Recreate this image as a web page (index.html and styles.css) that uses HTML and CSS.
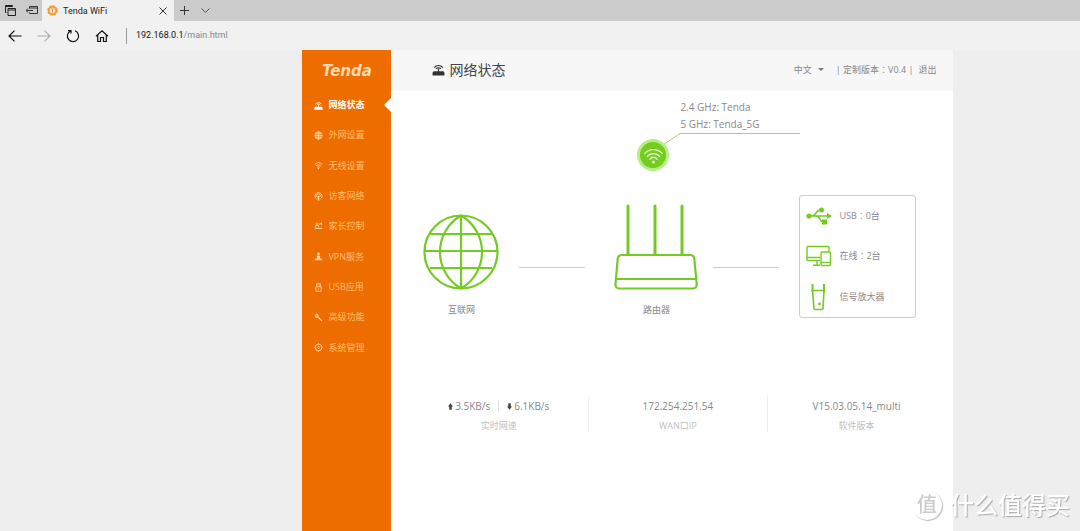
FILE: index.html
```html
<!DOCTYPE html>
<html lang="zh-CN">
<head>
<meta charset="utf-8">
<title>Tenda WiFi</title>
<link rel="stylesheet" href="styles.css">
</head>
<body>
<svg class="defs" aria-hidden="true">
  <symbol id="router" viewBox="0 0 12 12"><path d="M1.500 7.500h9l1 1.500v2.500H.5V9z" fill="currentColor"/><path d="M6 8V5M2 4.300a5 5 0 0 1 8 0M3.700 5.500a2.900 2.900 0 0 1 4.600 0" fill="none" stroke="currentColor" stroke-width="1.100"/></symbol>
  <symbol id="wifi" viewBox="0 0 12 12"><path d="M1 4.500a7.500 7.500 0 0 1 10 0M2.700 6.500a5 5 0 0 1 6.600 0M4.300 8.400a2.700 2.700 0 0 1 3.400 0" fill="none" stroke="currentColor" stroke-width="1.200"/><circle cx="6" cy="10" r="1" fill="currentColor"/></symbol>
</svg>

<header class="browser">
  <div class="tabs">
    <div class="tab-tools">
      <button class="icon-btn" aria-label="标签页"><svg width="11" height="11" viewBox="0 0 11 11" fill="none" stroke="#222"><path d="M1.500 7.500H.5v-7h7v1M.5 1.500h7M3 3.500h7.500v7H3zM3 5h7.500" /></svg></button>
      <button class="icon-btn" aria-label="搁置标签页"><svg width="12" height="9" viewBox="0 0 12 9" fill="none" stroke="#333"><path d="M3.500 2.500v-2h8v7h-8v-1M3.500 2h8M0 4.500h7M2 2.500l-2 2 2 2"/></svg></button>
    </div>
    <div class="tab">
      <svg width="11" height="11" viewBox="0 0 11 11"><circle cx="5.500" cy="5.500" r="3.800" fill="none" stroke="#f79a2c" stroke-width="2"/><circle cx="5.500" cy="5.500" r="4.900" fill="none" stroke="#f79a2c" stroke-dasharray="2 1.850"/><path d="M4 4h3M5.500 4v3.500" stroke="#f79a2c"/></svg>
      <span class="tab-title">Tenda WiFi</span>
      <button class="icon-btn" aria-label="关闭"><svg width="8" height="8" viewBox="0 0 8 8" stroke="#333"><path d="M.5.5l7 7M7.500.5l-7 7"/></svg></button>
    </div>
    <button class="icon-btn new-tab" aria-label="新建标签页"><svg width="9" height="9" viewBox="0 0 9 9" stroke="#333"><path d="M4.500 0v9M0 4.500h9"/></svg></button>
    <button class="icon-btn" aria-label="更多"><svg width="9" height="6" viewBox="0 0 9 6" fill="none" stroke="#555"><path d="M.5.5l4 4 4-4"/></svg></button>
  </div>
  <div class="toolbar">
    <button class="icon-btn" aria-label="后退"><svg width="14" height="12" viewBox="0 0 14 12" fill="none" stroke="#111" stroke-width="1.200"><path d="M1 6h12.500M6.500.6L1 6l5.500 5.400"/></svg></button>
    <button class="icon-btn" aria-label="前进"><svg width="14" height="12" viewBox="0 0 14 12" fill="none" stroke="#aaa" stroke-width="1.100"><path d="M.5 6H13M7.500.6L13 6l-5.500 5.400"/></svg></button>
    <button class="icon-btn" aria-label="刷新"><svg width="14" height="14" viewBox="0 0 14 14" fill="none" stroke="#111" stroke-width="1.200"><path d="M9 1.800A5.600 5.600 0 1 1 4.500 2M2 1.600h3v3"/></svg></button>
    <button class="icon-btn" aria-label="主页"><svg width="14" height="14" viewBox="0 0 14 14" fill="none" stroke="#111" stroke-width="1.200"><path d="M1 7.200l6-5.500 6 5.500M2.700 6v6.500h2.800V8.500h3v4h2.800V6"/></svg></button>
    <p class="address">192.168.0.1<span class="path">/main.html</span></p>
  </div>
</header>

<div class="page">
  <div class="app">
    <aside class="sidebar">
      <div class="logo">Tenda</div>
      <nav class="menu">
        <a class="active" href="#"><svg><use href="#router"/></svg>网络状态</a>
        <a href="#"><svg viewBox="0 0 12 12" fill="none" stroke="currentColor"><circle cx="6" cy="6" r="5"/><ellipse cx="6" cy="6" rx="2.300" ry="5"/><path d="M1 6h10M6 1v10M2 3.500h8M2 8.500h8"/></svg>外网设置</a>
        <a href="#"><svg><use href="#wifi"/></svg>无线设置</a>
        <a href="#"><svg viewBox="0 0 12 12" fill="none" stroke="currentColor" stroke-width="1.200"><path d="M3.500 9.500a4.700 4.700 0 1 1 5 0M4.300 7a2.500 2.500 0 1 1 3.400 0"/><path d="M6 5v6.500" stroke-width="2"/></svg>访客网络</a>
        <a href="#"><svg viewBox="0 0 12 12" fill="none" stroke="currentColor"><circle cx="4" cy="2.500" r="1.300"/><path d="M1.500 6c1-2 4-2 5 0M7 3l3-1.500V4M1 8.500h10" stroke-width="1.600"/></svg>家长控制</a>
        <a href="#"><svg viewBox="0 0 12 12" fill="currentColor"><circle cx="6" cy="2.500" r="2"/><path d="M4 5h4l.5 4H11v2H1V9h2.500z"/></svg>VPN服务</a>
        <a href="#"><svg viewBox="0 0 12 12" fill="none" stroke="currentColor" stroke-width="1.200"><path d="M3.500 5V1h5v4M2.500 5h7v6h-7zM5 2.500v1M7 2.500v1M5 8h2"/></svg>USB应用</a>
        <a href="#"><svg viewBox="0 0 12 12" fill="none" stroke="currentColor" stroke-width="1.800"><path d="M5.500 5.500l5 5M2.500 1.500L5 3l.5 2.500L3 5.500 1.500 3"/></svg>高级功能</a>
        <a href="#"><svg viewBox="0 0 12 12" fill="none" stroke="currentColor"><circle cx="6" cy="6" r="4.500" stroke-width="1.300"/><circle cx="6" cy="6" r="1.300"/><path d="M6 0v2M6 10v2M0 6h2M10 6h2"/></svg>系统管理</a>
      </nav>
    </aside>

    <main class="content">
      <div class="title-bar">
        <svg class="title-icon"><use href="#router"/></svg>
        <h1>网络状态</h1>
        <button class="lang">中文<span class="caret"></span></button>
        <span class="version">| 定制版本<span class="colon" lang="zh-TW">：</span>V0.4 |</span>
        <a class="logout" href="#">退出</a>
      </div>

      <div class="callout">
        <svg width="44" height="39" viewBox="0 0 44 39" fill="none">
          <path d="M27 12L44 .5" stroke="#a9cf70"/>
          <circle cx="17" cy="22" r="16" fill="#b4ee87"/><circle cx="17" cy="22" r="13" fill="#74cd1d"/>
          <g stroke="#e8fbd8" stroke-width="1.300" stroke-linecap="round"><path d="M8.700 20.500a12 12 0 0 1 17.600 0M11.300 23.500a8 8 0 0 1 12.400 0M14 26.300a4 4 0 0 1 7 0"/></g><circle cx="17.500" cy="29" r="1.500" fill="#e8fbd8"/>
        </svg>
        <div class="ssids"><p>2.4 GHz: Tenda</p><p>5 GHz: Tenda_5G</p></div>
      </div>

      <section class="topology">
        <figure class="node">
          <svg width="76" height="76" viewBox="0 0 76 76" fill="none" stroke="#75ca25" stroke-width="2.200"><circle cx="38" cy="38" r="36.500"/><path d="M38 1.500v73M1.500 37h73M7 20h62M7 54h62M38 1.500C10 18 10 58 38 74.500M38 1.500C66 18 66 58 38 74.500"/></svg>
          <figcaption>互联网</figcaption>
        </figure>
        <hr class="link">
        <figure class="node router">
          <svg width="84" height="86" viewBox="0 0 84 86" fill="none" stroke="#75ca25"><path d="M14 2v48M41 2v48M68 2v48" stroke-width="3" stroke-linecap="round"/><path d="M8 51h68q4 0 4.300 4l2.400 25q.2 4.500-4 4.500H5.500q-4.300 0-4-4.500L3.700 55Q4 51 8 51zM2 75h80" stroke-width="2.200"/></svg>
          <figcaption>路由器</figcaption>
        </figure>
        <hr class="link">
        <ul class="devices">
          <li><svg width="26" height="18" viewBox="0 0 26 18" fill="none" stroke="#75ca25" stroke-width="1.600"><path d="M3 9h19M6 9c4 0 4-6 8-6h1M10 9c4 0 4 6 7 6"/><circle cx="3" cy="9" r="2.600" fill="#75ca25" stroke="none"/><circle cx="15.500" cy="3" r="2.500" fill="#75ca25" stroke="none"/><path d="M16 12.500h5v5h-5zM21 6l5 3-5 3z" fill="#75ca25" stroke="none"/></svg><span>USB<span class="colon" lang="zh-TW">：</span>0台</span></li>
          <li><svg width="26" height="22" viewBox="0 0 26 22" fill="none" stroke="#75ca25" stroke-width="1.400"><path d="M14 15.500H2q-1 0-1-1v-12q0-1 1-1h20q1 0 1 1V6M1 12.500h13M7 20.300h7M11 15.500v4.500"/><rect x="15" y="7" width="9.500" height="13.500" rx="1"/><path d="M15 17.500h9.500"/></svg><span>在线<span class="colon" lang="zh-TW">：</span>2台</span></li>
          <li><svg width="26" height="28" viewBox="0 0 26 28" fill="none" stroke="#75ca25" stroke-width="1.600"><path d="M6.500 1v8M18 1v8" stroke-width="2"/><path d="M6.500 7.500H18L17 25.500q0 1-1 1H9q-1 0-1-1z"/><circle cx="13.500" cy="21" r="1.400" fill="#75ca25" stroke="none"/></svg>信号放大器</li>
        </ul>
      </section>

      <dl class="stats">
        <div><dt>实时网速</dt><dd class="speed">
          <svg width="5" height="7" viewBox="0 0 6 8" fill="#444"><path d="M3 0l3 4H4.500v4h-3V4H0z"/></svg><span>3.5KB/s</span><i class="bar"></i><svg width="5" height="7" viewBox="0 0 6 8" fill="#444"><path d="M3 8l3-4H4.500V0h-3v4H0z"/></svg><span>6.1KB/s</span></dd></div>
        <div><dt>WAN口IP</dt><dd>172.254.251.54</dd></div>
        <div><dt>软件版本</dt><dd>V15.03.05.14_multi</dd></div>
      </dl>
    </main>
  </div>
</div>

<div class="watermark"><span class="seal">值</span><span>什么值得买</span></div>
</body>
</html>
```
FILE: styles.css
```css
* { box-sizing: border-box; }

body {
  margin: 0;
  min-height: 100vh;
  display: flex;
  flex-direction: column;
  background: #eee;
  color: #888;
  font: 9px/20px "Open Sans", "Noto Sans CJK SC", sans-serif;
}

h1, p, dl, dd, ul, figure { margin: 0; padding: 0; }
a { color: inherit; text-decoration: none; }
button { padding: 0; border: 0; background: none; color: inherit; font: inherit; }
svg { flex: none; }
.defs { position: absolute; width: 0; height: 0; }
.icon-btn { display: flex; }
.colon { font-family: "Noto Sans CJK TC", sans-serif; }

/* Browser frame */
.browser { font-family: Roboto, sans-serif; }
.tabs { display: flex; align-items: center; height: 21px; background: #cbcbcb; }
.tab-tools { display: flex; align-items: center; gap: 10px; width: 42px; padding-left: 5px; }
.tab {
  display: flex;
  align-items: center;
  gap: 5px;
  width: 132px;
  height: 21px;
  padding: 0 7px 0 5px;
  background: #f1f1f1;
  color: #222;
}
.tab-title { flex: 1; }
.new-tab { margin: 0 12px 0 6px; }
.toolbar {
  display: flex;
  align-items: center;
  gap: 15px;
  height: 29px;
  padding-left: 8px;
  background: #f1f1f1;
}
.address {
  margin-left: 2px;
  padding: 0 0 2px 9px;
  border-left: 1px solid #999;
  color: #111;
  line-height: 14px;
}
.address .path { color: #888; }

/* Page shell */
.page {
  flex: 1;
  display: grid;
  grid-template-columns: 28% minmax(0, 651px) 1fr;
}
.app { grid-column: 2; display: flex; background: #fff; }

.sidebar { flex: none; width: 89px; background: #ed6d00; }
.logo {
  height: 40px;
  color: #ffd9b0;
  font: italic bold 15px/42px "DejaVu Sans", sans-serif;
  text-align: center;
}
.menu { display: grid; grid-auto-rows: 1fr; min-height: 273px; }
.menu a {
  position: relative;
  display: flex;
  align-items: center;
  gap: 5px;
  padding-left: 12px;
  color: #ffbd6e;
}
.menu svg { width: 9px; height: 9px; color: #ffd3a0; }
.menu .active, .menu .active svg { color: #fff; font-weight: 700; }
.menu .active::after {
  content: "";
  position: absolute;
  right: 0;
  border: 7px solid transparent;
  border-left-width: 0;
  border-right-color: #fff;
}

.content { flex: 1; min-width: 0; }
.title-bar {
  display: flex;
  align-items: center;
  height: 40px;
  padding: 0 17px 0 41px;
  background: #f7f7f7;
  border-bottom: 1px solid #f3f3f3;
}
.title-icon { width: 13px; height: 13px; margin-right: 4px; color: #333; }
h1 { color: #444; font-size: 14px; font-weight: 400; }
.lang { display: flex; align-items: center; gap: 6px; margin-left: auto; }
.caret { border: 3px solid transparent; border-top-color: #777; border-bottom: 0; }
.version { margin: 0 5px 0 12px; }

/* Wireless callout */
.callout { display: flex; align-items: flex-start; padding: 9px 0 0 245px; }
.callout svg { margin-top: 34px; }
.ssids {
  width: 120px;
  border-bottom: 1px solid #a9cf70;
  font-size: 10px;
  line-height: 17px;
}

/* Network diagram */
.topology {
  display: flex;
  align-items: flex-end;
  padding: 23px 37px 0 32px;
}
.node { display: flex; flex-direction: column; align-items: center; gap: 10px; }
.link {
  flex: 1;
  margin: 0 14px 52px 20px;
  border: 0;
  border-top: 1px solid #ccc;
}
.router { margin-left: 15px; }
.router + .link { margin: 0 20px 52px 15px; }
.devices {
  display: flex;
  flex-direction: column;
  justify-content: space-around;
  width: 117px;
  height: 123px;
  margin-bottom: 2px;
  padding-left: 6px;
  border: 1px solid #ccc;
  border-radius: 3px;
  list-style: none;
}
.devices li { display: flex; align-items: center; gap: 7px; height: 28px; }

/* Traffic and version figures */
.stats {
  display: grid;
  grid-template-columns: repeat(3, 1fr);
  padding: 76px 8px 0 18px;
  text-align: center;
}
.stats div { display: flex; flex-direction: column-reverse; height: 36px; justify-content: flex-end; }
.stats div + div { border-left: 1px solid #eee; }
.stats dt { color: #c0c0c0; }
.stats dd { font-size: 10px; }
.speed { display: flex; align-items: center; justify-content: center; gap: 2px; }
.bar { height: 10px; margin: 0 6px; border-left: 1px solid #ddd; }

/* Page watermark */
.watermark {
  position: fixed;
  right: 10px;
  bottom: 11px;
  display: flex;
  align-items: center;
  gap: 8px;
  color: #fff;
  font-size: 24px;
  font-weight: 500;
  line-height: 30px;
  text-shadow: 1px 1px 1px #aaa;
}
.seal {
  width: 30px;
  height: 30px;
  border-radius: 50%;
  box-shadow: 1px 1px 1px #bbb;
  color: #ccc;
  font-size: 20px;
  text-align: center;
  text-shadow: none;
}
```
